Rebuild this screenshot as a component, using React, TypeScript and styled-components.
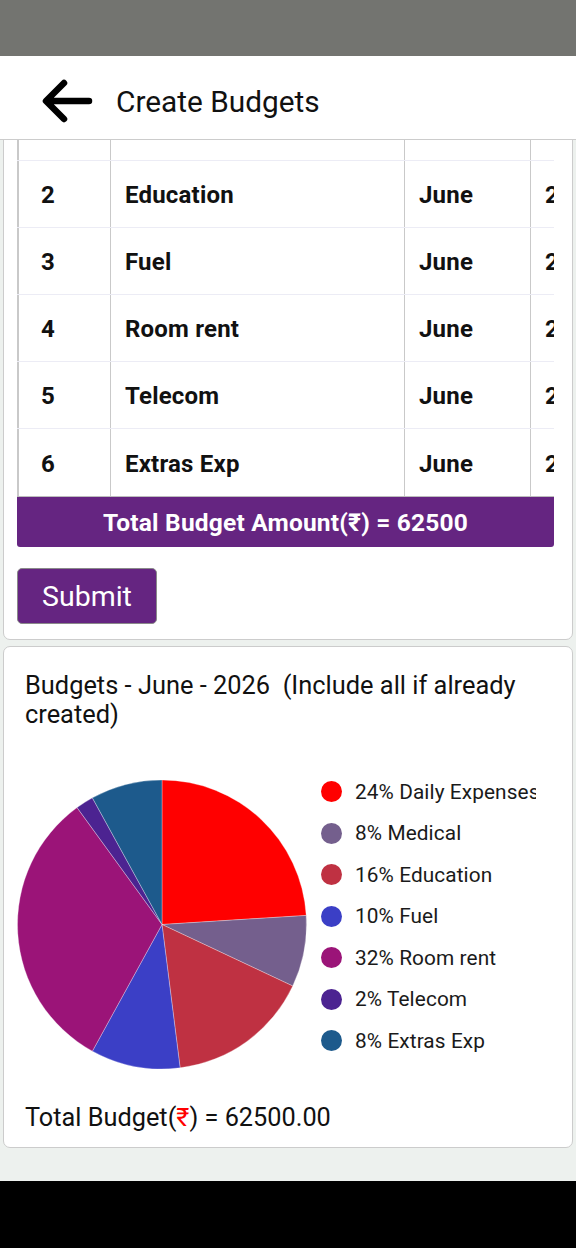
import React, { useLayoutEffect, useRef } from 'react'
import styled, { createGlobalStyle } from 'styled-components'

const GlobalStyle = createGlobalStyle`
  html, body {
    margin: 0;
    padding: 0;
    background: #edf1ee;
  }
  body {
    font-family: Roboto, "Noto Sans", "DejaVu Sans", sans-serif;
    color: #111;
  }
  * {
    box-sizing: border-box;
  }
`

const colors = {
  purple: '#652581',
  pageBg: '#edf1ee',
  border: '#cccccc',
  cellLine: '#c9c9c9',
  rowLine: '#ececf5'
}

interface BudgetItem {
  no: number
  category: string
  amount: number
  color: string
}

const items: BudgetItem[] = [
  { no: 1, category: 'Daily Expenses', amount: 15000, color: '#ff0000' },
  { no: 2, category: 'Medical', amount: 5000, color: '#745f8d' },
  { no: 3, category: 'Education', amount: 10000, color: '#bf3142' },
  { no: 4, category: 'Fuel', amount: 6250, color: '#3b3fc6' },
  { no: 5, category: 'Room rent', amount: 20000, color: '#9b1478' },
  { no: 6, category: 'Telecom', amount: 1250, color: '#4c2391' },
  { no: 7, category: 'Extras Exp', amount: 5000, color: '#1d5a8c' }
]

// rows of the form table (the first one is scrolled mostly out of view)
const tableRows = [
  { no: 1, category: 'Medical' },
  { no: 2, category: 'Education' },
  { no: 3, category: 'Fuel' },
  { no: 4, category: 'Room rent' },
  { no: 5, category: 'Telecom' },
  { no: 6, category: 'Extras Exp' }
]

const total = items.reduce((sum, i) => sum + i.amount, 0)

const Screen = styled.div`
  width: 576px;
  height: 1248px;
  display: flex;
  flex-direction: column;
  overflow: hidden;
`

const StatusBar = styled.div`
  height: 56px;
  flex: none;
  background: #737470;
`

const AppBar = styled.header`
  height: 84px;
  flex: none;
  display: flex;
  align-items: center;
  padding: 9px 0 0 38px;
  background: #fff;
  border-bottom: 1px solid ${colors.border};
`

const BackButton = styled.button`
  width: 56px;
  height: 56px;
  padding: 0;
  border: none;
  background: none;
  display: flex;
  cursor: pointer;
`

const Title = styled.h1`
  margin: 0 0 0 22px;
  font-size: 29.8px;
  font-weight: 400;
  color: #111;
  line-height: 1;
`

const ScrollArea = styled.main`
  flex: 1;
  overflow-y: auto;
  scrollbar-width: none;
  &::-webkit-scrollbar {
    display: none;
  }
  padding: 6px 3px 33px 3px;
  display: flex;
  flex-direction: column;
  gap: 6px;
`

const Card = styled.section<{ $padTop?: number }>`
  background: #fff;
  border: 1px solid ${colors.border};
  border-radius: 7px;
  padding: ${(p) => p.$padTop ?? 14}px 14px 15px 13px;
  flex: none;
`

const CardHeading = styled.h2`
  margin: 0 0 16px 0;
  font-size: 24px;
  font-weight: 500;
  color: #111;
`

const TableWrap = styled.div`
  width: 537px;
  overflow: hidden;
`

const Row = styled.div<{ $last?: boolean }>`
  display: grid;
  grid-template-columns: 93px 294px 126px 120px 140px;
  width: 773px;
  height: 67px;
  border-bottom: ${(p) => (p.$last ? 'none' : `1px solid ${colors.rowLine}`)};
`

const Cell = styled.div<{ $first?: boolean; $head?: boolean }>`
  display: flex;
  align-items: center;
  padding-top: 2px;
  border-left: ${(p) => (p.$first ? 2 : 1)}px solid ${colors.cellLine};
  padding-left: ${(p) => (p.$first ? 22 : 14)}px;
  font-size: 24px;
  letter-spacing: 0.2px;
  font-weight: 700;
  color: ${(p) => (p.$head ? '#fff' : '#111')};
  background: ${(p) => (p.$head ? colors.purple : 'transparent')};
  white-space: nowrap;
`

const TotalBar = styled.div`
  width: 537px;
  height: 51px;
  border-top: 1px solid #bdbdbd;
  background: ${colors.purple};
  border-radius: 0 0 3px 3px;
  color: #fff;
  font-size: 24.5px;
  letter-spacing: 0.2px;
  font-weight: 700;
  display: flex;
  align-items: center;
  justify-content: center;
`

const SubmitButton = styled.button`
  margin-top: 21px;
  width: 140px;
  height: 56px;
  background: ${colors.purple};
  border: 1px solid #8a8a8a;
  border-radius: 5px;
  color: #fff;
  font-family: inherit;
  font-size: 28.5px;
  font-weight: 400;
  padding: 0;
  cursor: pointer;
`

const ChartTitle = styled.h3`
  margin: 0;
  padding: 0 8px;
  font-size: 25.4px;
  line-height: 29px;
  font-weight: 400;
  color: #111;
`

const ChartRow = styled.div`
  display: flex;
  align-items: flex-start;
  margin-top: 50px;
  width: 519px;
  overflow: hidden;
`

const Legend = styled.ul`
  list-style: none;
  margin: -8px 0 0 14px;
  padding: 0;
  min-width: 0;
  flex: 1;
  overflow: hidden;
`

const LegendItem = styled.li`
  height: 41.5px;
  display: flex;
  align-items: center;
  white-space: nowrap;
  font-size: 20.8px;
  letter-spacing: 0.1px;
  color: #1a1a1a;
`

const Dot = styled.span<{ $color: string }>`
  width: 21px;
  height: 21px;
  border-radius: 50%;
  background: ${(p) => p.$color};
  flex: none;
  margin-right: 13px;
`

const TotalLine = styled.p`
  margin: 33px 0 0 0;
  padding: 0 8px;
  font-size: 25.3px;
  line-height: 29px;
  color: #111;
`

const Rupee = styled.span`
  color: #ff0000;
`

const NavBar = styled.div`
  height: 67px;
  flex: none;
  background: #000;
`

function BackArrow() {
  return (
    <svg width="56" height="56" viewBox="0 0 56 56" fill="none">
      <path
        d="M51 27H9M26 9L8 27L26 45"
        stroke="#000"
        strokeWidth="6.5"
        strokeLinecap="round"
        strokeLinejoin="round"
      />
    </svg>
  )
}

function PieChart({ data }: { data: BudgetItem[] }) {
  const cx = 145
  const cy = 145.5
  const r = 144.5
  const point = (a: number) => {
    const rad = (a * Math.PI) / 180
    return `${(cx + r * Math.sin(rad)).toFixed(2)} ${(cy - r * Math.cos(rad)).toFixed(2)}`
  }
  let start = 0
  const slices = data.map((d) => {
    const sweep = (d.amount / total) * 360
    const end = start + sweep
    const path = `M${cx} ${cy}L${point(start)}A${r} ${r} 0 ${sweep > 180 ? 1 : 0} 1 ${point(end)}Z`
    start = end
    return <path key={d.no} d={path} fill={d.color} stroke="#ffffff" strokeOpacity="0.5" strokeWidth="0.6" />
  })
  return (
    <svg width="290" height="291" viewBox="0 0 290 291" style={{ flex: 'none' }}>
      {slices}
    </svg>
  )
}

export default function App() {
  const scrollRef = useRef<HTMLElement>(null)

  // the screenshot shows the page scrolled all the way down
  useLayoutEffect(() => {
    const el = scrollRef.current
    if (el) el.scrollTop = el.scrollHeight
  }, [])

  return (
    <Screen>
      <GlobalStyle />
      <StatusBar />
      <AppBar>
        <BackButton aria-label="Back">
          <BackArrow />
        </BackButton>
        <Title>Create Budgets</Title>
      </AppBar>
      <ScrollArea ref={scrollRef}>
        <Card>
          <CardHeading>Budget Details - June 2026</CardHeading>
          <TableWrap>
            <Row>
              <Cell $first $head>#</Cell>
              <Cell $head>Category</Cell>
              <Cell $head>Month</Cell>
              <Cell $head>Year</Cell>
              <Cell $head>Amount(₹)</Cell>
            </Row>
            {tableRows.map((row, idx) => {
              const item = items.find((i) => i.category === row.category)
              return (
                <Row key={row.no} $last={idx === tableRows.length - 1}>
                  <Cell $first>{row.no}</Cell>
                  <Cell>{row.category}</Cell>
                  <Cell>June</Cell>
                  <Cell>2026</Cell>
                  <Cell>{item ? item.amount : ''}</Cell>
                </Row>
              )
            })}
          </TableWrap>
          <TotalBar>Total Budget Amount(₹) = {total}</TotalBar>
          <SubmitButton>Submit</SubmitButton>
        </Card>
        <Card $padTop={24}>
          <ChartTitle>Budgets - June - 2026&nbsp;&nbsp;(Include all if already created)</ChartTitle>
          <ChartRow>
            <PieChart data={items} />
            <Legend>
              {items.map((d) => (
                <LegendItem key={d.no}>
                  <Dot $color={d.color} />
                  {Math.round((d.amount / total) * 100)}% {d.category}
                </LegendItem>
              ))}
            </Legend>
          </ChartRow>
          <TotalLine>
            Total Budget(<Rupee>₹</Rupee>) = {total.toFixed(2)}
          </TotalLine>
        </Card>
      </ScrollArea>
      <NavBar />
    </Screen>
  )
}
